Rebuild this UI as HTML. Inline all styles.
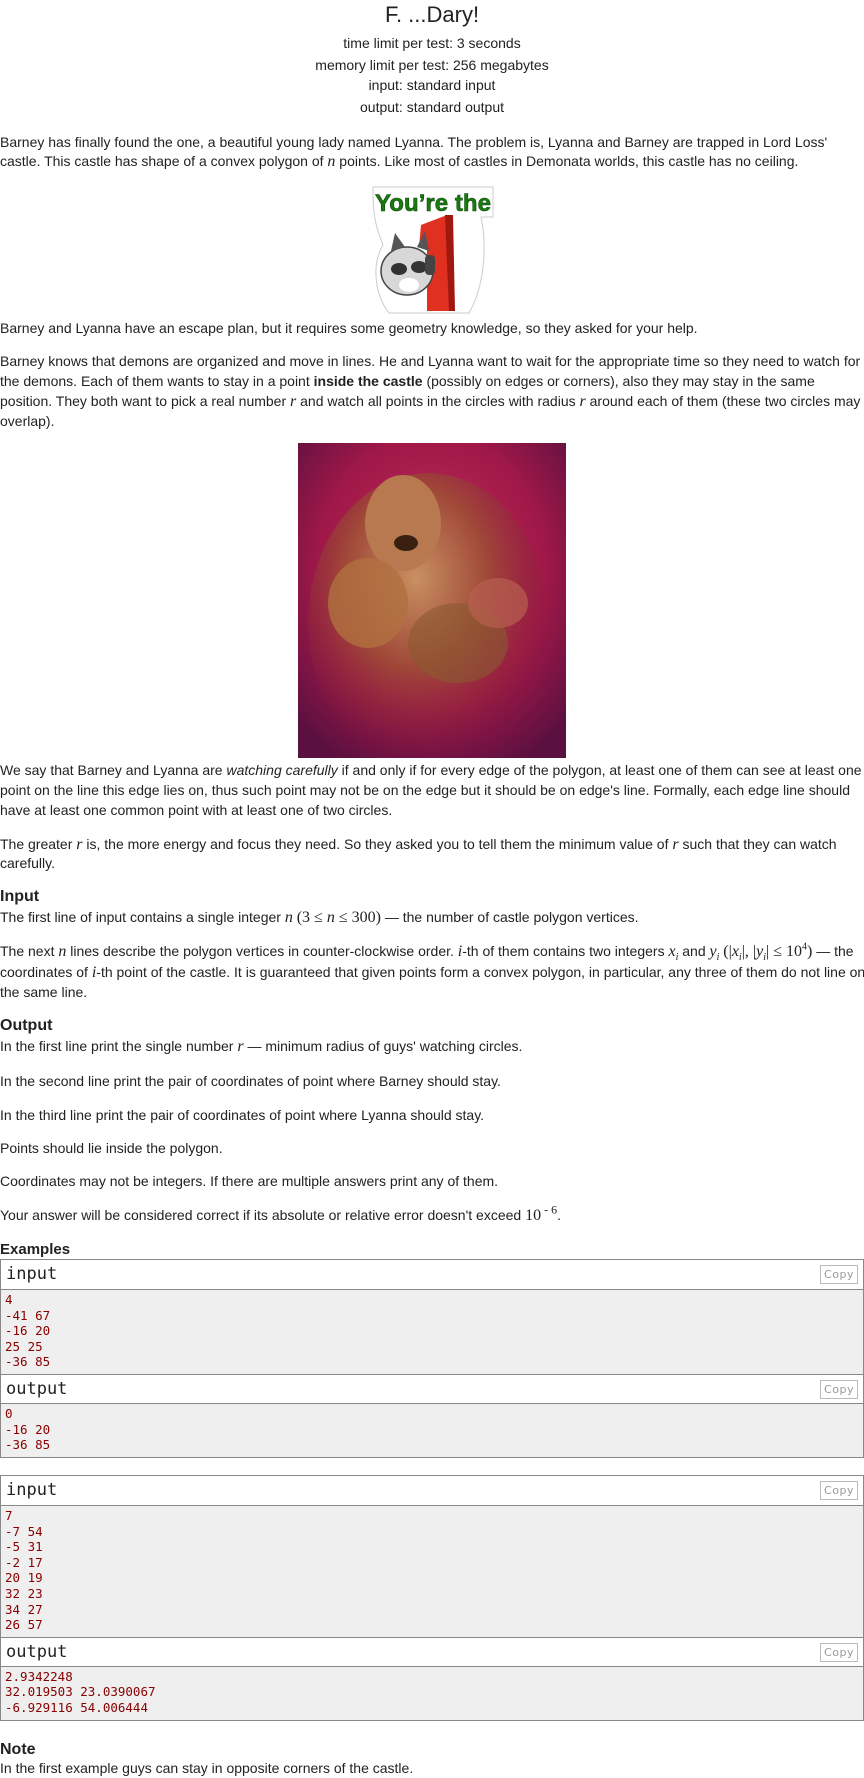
<!DOCTYPE html>
<html><head><meta charset="utf-8"><style>
*{margin:0;padding:0;box-sizing:border-box}
body{width:864px;height:1777px;background:#fff;font-family:"Liberation Sans",Arial,sans-serif;font-size:14px;color:#222;position:relative;overflow:hidden}
.a{position:absolute;left:0;white-space:nowrap;line-height:20px}
.c{position:absolute;left:0;width:864px;text-align:center;line-height:20px}
i.m{font-family:"Liberation Serif",serif;font-style:italic;font-size:16px;line-height:0}
.s{font-family:"Liberation Serif",serif;font-size:16px;line-height:0}
sub,sup{line-height:0;font-size:10px}
h3{position:absolute;left:0;font-size:16px;font-weight:bold;line-height:20px}
.box{position:absolute;left:0;width:864px;border:1px solid #888}
.hd{height:30px;border-bottom:1px solid #888;background:#fff;position:relative;font-family:"DejaVu Sans Mono",monospace;font-size:17px;line-height:28px;padding-left:5px}
.cp{position:absolute;right:5px;top:5px;width:38px;height:19px;border:1px solid #bbb;font-family:"DejaVu Sans",sans-serif;font-size:11px;color:#999;line-height:17px;text-align:center;letter-spacing:.5px}
.bd{background:#efefef;font-family:"DejaVu Sans Mono",monospace;font-size:12.5px;color:#800;line-height:15.6px;padding:2px 4px 4px}
</style></head><body>
<div class="c" style="top:3px;font-size:22px;line-height:24px">F. ...Dary!</div>
<div class="c" style="top:33px">time limit per test: 3 seconds</div>
<div class="c" style="top:55px">memory limit per test: 256 megabytes</div>
<div class="c" style="top:75px">input: standard input</div>
<div class="c" style="top:97px">output: standard output</div>
<div class="a" style="top:132px">Barney has finally found the one, a beautiful young lady named Lyanna. The problem is, Lyanna and Barney are trapped in Lord Loss'</div>
<div class="a" style="top:151px">castle. This castle has shape of a convex polygon of <i class="m">n</i> points. Like most of castles in Demonata worlds, this castle has no ceiling.</div>
<svg style="position:absolute;left:369px;top:185px" width="128" height="130" viewBox="0 0 128 130">
<path d="M4 2 H124 V32 H112 C118 60 116 100 100 128 H20 C6 110 2 80 14 60 C6 40 4 30 4 2Z" fill="#fff" stroke="#ccc"/>
<text x="64" y="26" text-anchor="middle" font-family="Liberation Sans" font-weight="bold" font-size="24" fill="#1a7a10" stroke="#0c4a08" stroke-width=".6" textLength="116">You’re the</text>
<path d="M52 40 L78 30 L82 30 L84 126 L58 126 L58 60 L50 62Z" fill="#e03020"/>
<path d="M76 30 L84 30 L86 126 L80 126Z" fill="#a01810"/>
<ellipse cx="38" cy="86" rx="26" ry="24" fill="#d8d8d8" stroke="#444" stroke-width="1.5"/>
<ellipse cx="30" cy="84" rx="8" ry="6" fill="#333"/><ellipse cx="50" cy="82" rx="8" ry="6" fill="#333"/>
<path d="M22 66 L26 48 L36 62Z M48 62 L56 46 L60 66Z" fill="#555"/>
<ellipse cx="40" cy="100" rx="10" ry="7" fill="#fff"/>
<rect x="56" y="70" width="10" height="20" rx="4" fill="#444"/>
</svg>
<div class="a" style="top:318px">Barney and Lyanna have an escape plan, but it requires some geometry knowledge, so they asked for your help.</div>
<div class="a" style="top:351px">Barney knows that demons are organized and move in lines. He and Lyanna want to wait for the appropriate time so they need to watch for</div>
<div class="a" style="top:371px">the demons. Each of them wants to stay in a point <b>inside the castle</b> (possibly on edges or corners), also they may stay in the same</div>
<div class="a" style="top:391px">position. They both want to pick a real number <i class="m">r</i> and watch all points in the circles with radius <i class="m">r</i> around each of them (these two circles may</div>
<div class="a" style="top:411px">overlap).</div>
<svg style="position:absolute;left:298px;top:443px" width="268" height="315" viewBox="0 0 268 315">
<defs><radialGradient id="bg" cx=".5" cy=".4" r=".7"><stop offset="0" stop-color="#c0305a"/><stop offset=".6" stop-color="#a01848"/><stop offset="1" stop-color="#5a1040"/></radialGradient>
<radialGradient id="fg" cx=".45" cy=".35" r=".6"><stop offset="0" stop-color="#c89060"/><stop offset=".5" stop-color="#a04838"/><stop offset="1" stop-color="#801838" stop-opacity="0"/></radialGradient></defs>
<rect width="268" height="315" fill="url(#bg)"/>
<ellipse cx="130" cy="180" rx="120" ry="150" fill="url(#fg)"/>
<ellipse cx="105" cy="80" rx="38" ry="48" fill="#b87850"/>
<ellipse cx="108" cy="100" rx="12" ry="8" fill="#3a2010"/>
<ellipse cx="70" cy="160" rx="40" ry="45" fill="#b07040" opacity=".8"/>
<ellipse cx="160" cy="200" rx="50" ry="40" fill="#8a5a30" opacity=".6"/>
<ellipse cx="200" cy="160" rx="30" ry="25" fill="#b86050" opacity=".7"/>
</svg>
<div class="a" style="top:760px">We say that Barney and Lyanna are <i>watching carefully</i> if and only if for every edge of the polygon, at least one of them can see at least one</div>
<div class="a" style="top:780px">point on the line this edge lies on, thus such point may not be on the edge but it should be on edge's line. Formally, each edge line should</div>
<div class="a" style="top:800px">have at least one common point with at least one of two circles.</div>
<div class="a" style="top:834px">The greater <i class="m">r</i> is, the more energy and focus they need. So they asked you to tell them the minimum value of <i class="m">r</i> such that they can watch</div>
<div class="a" style="top:853px">carefully.</div>
<h3 style="top:887px">Input</h3>
<div class="a" style="top:907px">The first line of input contains a single integer <i class="m">n</i> <span class="s">(3 ≤ <i>n</i> ≤ 300)</span> — the number of castle polygon vertices.</div>
<div class="a" style="top:941px">The next <i class="m">n</i> lines describe the polygon vertices in counter-clockwise order. <i class="m">i</i>-th of them contains two integers <i class="m">x<sub>i</sub></i> and <i class="m">y<sub>i</sub></i> <span class="s">(|<i>x<sub>i</sub></i>|, |<i>y<sub>i</sub></i>| ≤ 10<sup>4</sup>)</span> — the</div>
<div class="a" style="top:962px">coordinates of <i class="m">i</i>-th point of the castle. It is guaranteed that given points form a convex polygon, in particular, any three of them do not line on</div>
<div class="a" style="top:982px">the same line.</div>
<h3 style="top:1016px">Output</h3>
<div class="a" style="top:1036px">In the first line print the single number <i class="m">r</i> — minimum radius of guys' watching circles.</div>
<div class="a" style="top:1071px">In the second line print the pair of coordinates of point where Barney should stay.</div>
<div class="a" style="top:1105px">In the third line print the pair of coordinates of point where Lyanna should stay.</div>
<div class="a" style="top:1138px">Points should lie inside the polygon.</div>
<div class="a" style="top:1171px">Coordinates may not be integers. If there are multiple answers print any of them.</div>
<div class="a" style="top:1205px">Your answer will be considered correct if its absolute or relative error doesn't exceed <span class="s">10<sup style="font-size:12px"> - 6</sup></span>.</div>
<h3 style="top:1240px;font-size:15px">Examples</h3>
<div class="box" style="top:1259px">
<div class="hd">input<div class="cp">Copy</div></div>
<div class="bd">4<br>-41 67<br>-16 20<br>25 25<br>-36 85</div>
<div class="hd" style="border-top:1px solid #888">output<div class="cp">Copy</div></div>
<div class="bd">0<br>-16 20<br>-36 85</div>
</div>
<div class="box" style="top:1475px">
<div class="hd">input<div class="cp">Copy</div></div>
<div class="bd">7<br>-7 54<br>-5 31<br>-2 17<br>20 19<br>32 23<br>34 27<br>26 57</div>
<div class="hd" style="border-top:1px solid #888">output<div class="cp">Copy</div></div>
<div class="bd">2.9342248<br>32.019503 23.0390067<br>-6.929116 54.006444</div>
</div>
<h3 style="top:1740px">Note</h3>
<div class="a" style="top:1758px">In the first example guys can stay in opposite corners of the castle.</div>
</body></html>
